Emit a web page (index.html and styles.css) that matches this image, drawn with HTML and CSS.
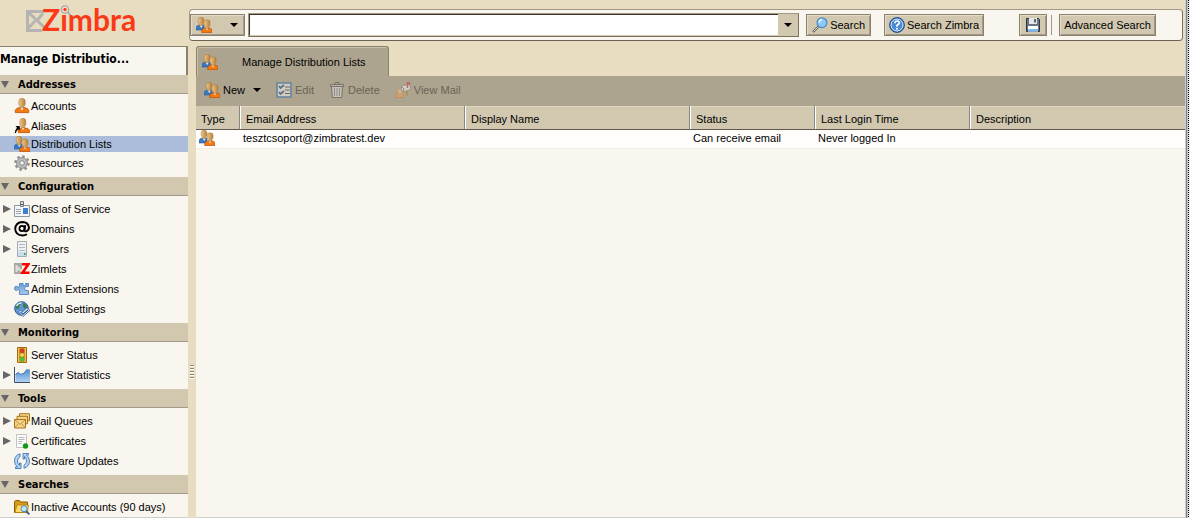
FILE: index.html
```html
<!DOCTYPE html>
<html lang="en">
<head>
<meta charset="utf-8">
<title>Zimbra Administration</title>
<link rel="stylesheet" href="styles.css">
</head>
<body>
<svg class="sprite" aria-hidden="true">
  <defs>
    <linearGradient id="g-skin" x1="0" x2="1"><stop offset="0" stop-color="#ecc98e"/><stop offset="1" stop-color="#b98039"/></linearGradient>
    <linearGradient id="g-blue" x1="0" x2="0" y1="0" y2="1"><stop offset="0" stop-color="#4f8fd6"/><stop offset="1" stop-color="#b4d2f0"/></linearGradient>
    <linearGradient id="g-pane" x1="0" x2="0" y1="0" y2="1"><stop offset="0" stop-color="#6c9fdb"/><stop offset="1" stop-color="#a9c6e8"/></linearGradient>
  </defs>
  <symbol id="i-group" viewBox="0 0 16 16">
    <path d="M0 13V10.500Q.5 8.500 3 8h5v5z" fill="#3a78c2" stroke="#2a5c9c" stroke-width=".6"/>
    <path d="M3.500 8l1.700 3L7 8z" fill="#fff"/>
    <path d="M2.200 2.700Q2.200.3 5 .3T7.800 2.700V4.700Q7.800 6.500 6.400 7v1.800H3.600V7Q2.200 6.500 2.200 4.700z" fill="url(#g-skin)" stroke="#a87436" stroke-width=".5"/>
    <path d="M5.800 15.700V13.200Q6.500 11.300 8.500 11h5q2 .3 2.500 2.200v2.500z" fill="#f27a10" stroke="#b74c06" stroke-width=".7"/>
    <path d="M9.500 11l1.500 2.200 1.500-2.200z" fill="#fff"/>
    <path d="M8 5.200Q8 2.800 11 2.800t3 2.400v2.300q0 1.900-1.500 2.500v1.500H9.500V10Q8 9.400 8 7.500z" fill="url(#g-skin)" stroke="#a87436" stroke-width=".5"/>
  </symbol>
  <symbol id="i-user" viewBox="0 0 16 16">
    <path d="M1.300 14.600v-2.300Q2 10.300 5.500 9.500h5q3.500.8 4.200 2.800v2.300z" fill="#f27a10" stroke="#b74c06" stroke-width=".8"/>
    <path d="M6 9.500l2 3 2-3z" fill="#fff"/>
    <path d="M4.800 3.200Q4.800.3 8 .3t3.200 2.900v2.500Q11.200 7.700 9.700 8.400V10H6.300V8.400Q4.800 7.700 4.800 5.700z" fill="url(#g-skin)" stroke="#a87436" stroke-width=".5"/>
  </symbol>
  <symbol id="i-alias" viewBox="0 0 16 16">
    <path d="M4.300 14.600v-2.300q.7-1.800 3-2.300h4.400q3.100.5 3.900 2.300v2.300z" fill="#f27a10" stroke="#b74c06" stroke-width=".8"/>
    <path d="M7.500 9.800l1.500 2.500 1.500-2.500z" fill="#fff"/>
    <path d="M5.800 3.200Q5.800.3 8.800.3t3 2.900v2.500q0 2-1.400 2.700V10H7.200V8.400Q5.800 7.700 5.800 5.700z" fill="url(#g-skin)" stroke="#a87436" stroke-width=".5"/>
    <path d="M1.500 8h4.300v4.500L4.400 11.200Q2.500 12.500 1.800 15H.8q0-3 2.200-5.200z" fill="#000"/>
  </symbol>
  <symbol id="i-gear" viewBox="0 0 16 16">
    <circle cx="8" cy="8" r="6.600" fill="none" stroke="#8f8f8f" stroke-width="2.400" stroke-dasharray="2.600 2.580"/>
    <circle cx="8" cy="8" r="5.400" fill="#bcbcbc" stroke="#8d8d8d"/>
    <circle cx="8" cy="8" r="2.300" fill="#f9f6ef" stroke="#858585"/>
  </symbol>
  <symbol id="i-cos" viewBox="0 0 16 16">
    <path d="M.5 4.500h15v11H.5z" fill="#f4f6f8" stroke="#8b97a5"/>
    <path d="M2 8.500h5M2 10.500h5M2 12.500h5" stroke="#a0a5ad"/>
    <path d="M9 7h5v6H9z" fill="#3f7fd0"/>
    <path d="M6.500.5h3v5h-3z" fill="#ddd" stroke="#777"/><path d="M7 3.500h2" stroke="#555"/>
  </symbol>
  <symbol id="i-domain" viewBox="0 0 16 16">
    <circle cx="8" cy="7.500" r="2.600" fill="none" stroke="#000" stroke-width="1.800"/>
    <path d="M11.200 4.200l-.7 4.500q0 2 1.600 1.600Q15 9.500 15 6.500 14 1 8.500 1 1.500 1.300 1.200 8q.4 6.300 7.300 6.500 2.500 0 4.500-1.200" fill="none" stroke="#000" stroke-width="1.900"/>
  </symbol>
  <symbol id="i-server" viewBox="0 0 16 16">
    <path d="M3.500.5h9v15h-9z" fill="#eef1f3" stroke="#a5abb0"/>
    <path d="M5 3.500h6M5 6.500h6M5 9.500h6" stroke="#b2b8bd"/>
    <path d="M4 11h8v4H4z" fill="#c8ddee"/><path d="M10 12h1.500v2H10z" fill="#43a32c"/>
  </symbol>
  <symbol id="i-zimlet" viewBox="0 0 16 16">
    <path d="M0 2h8v11H0z" fill="#a8a8a6"/><path d="M2 4l4 3.500L2 11z" fill="#d9d6cf" stroke="#efece5" stroke-width=".8"/><path d="M6 7.500L8 9v3L5 9z" fill="#e9e6df"/>
    <path d="M8 3.300h6.300L8.500 11.700H15.500" fill="none" stroke="#f00" stroke-width="2.600"/>
  </symbol>
  <symbol id="i-puzzle" viewBox="0 0 16 16">
    <path d="M5.500 2.500H9q-.5 2 1.300 2.200 2-.2 1.200-2.200h3v3q-4-.7-4 2t4 2v4h-9V9.800Q4.700 8.300 4 8.300 3.500 9.500 2.300 9.500.5 9.500.5 7.300T2.500 5.300q1.200 0 1.500 1 1 0 1.500-1z" fill="url(#g-pane)" stroke="#4179b9" stroke-width=".8"/>
  </symbol>
  <symbol id="i-globe" viewBox="0 0 16 16">
    <circle cx="7.500" cy="7.500" r="6.800" fill="#5f97d6" stroke="#28568e"/>
    <path d="M2 5.500Q3.500 2 6.500 1.800l.5 1.700-2 1.500.5 2-2 1-1.500-.5zM9 2l3 1.500 1.300 3.300-2.800.7L9 5.500z" fill="#3c7b4b"/>
    <path d="M2.500 5q1.500-3 5-3.200" stroke="#e1f1ff" stroke-width="1.200" fill="none"/>
    <path d="M4.500 11l2-2 2 2L13 6.800l3 2.500-7 6.200z" fill="#eef6ff" stroke="#2c5c91" stroke-width=".8"/><path d="M6.500 10.800l2.500 2.500 5-4.300" stroke="#24558d" fill="none" stroke-width="1.200"/>
  </symbol>
  <symbol id="i-light" viewBox="0 0 16 16">
    <path d="M3.500.5h9v15h-9z" fill="#f4c648" stroke="#a56b0b"/>
    <path d="M5.500 1.500h5v13h-5z" fill="#8a6d28"/>
    <circle cx="8" cy="3.700" r="2.200" fill="#e43524"/><circle cx="8" cy="8" r="2.100" fill="#f5d24a"/><circle cx="8" cy="12.300" r="2.200" fill="#49c340"/>
  </symbol>
  <symbol id="i-chart" viewBox="0 0 16 16">
    <path d="M1.500 7.500L4 5.500l2.500 1.800 3.500-1 2.500-3.500 3.500 1V15H1.500z" fill="url(#g-blue)"/>
    <path d="M1.500 7.500L4 5.500l2.500 1.800 3.500-1 2.500-3.500L16 3" stroke="#4377b0" fill="none"/>
    <path d="M.5 0v15.500H16" stroke="#3c4c60" fill="none"/>
  </symbol>
  <symbol id="i-mailq" viewBox="0 0 16 16">
    <g fill="#f2d58b" stroke="#a9761c"><path d="M5.500.7h10v7h-10z"/><path d="M3 3.300h10.500v7.500H3z"/><path d="M.5 6.500h11v8.500H.5z"/></g>
    <path d="M.5 6.500L6 11.500l5.500-5M.5 15l4-4.500M11.500 15l-4-4.500" fill="none" stroke="#b98628" stroke-width=".8"/>
  </symbol>
  <symbol id="i-cert" viewBox="0 0 16 16">
    <path d="M2.500 1.500h10v13h-10z" fill="#fbfbfb" stroke="#c2c2c2"/><path d="M4.500 4.500h6M4.500 6.500h6M4.500 8.500h4M4.500 10.500h3" stroke="#b5b5b5"/>
    <circle cx="11.500" cy="13" r="2.700" fill="#0b9a12"/>
  </symbol>
  <symbol id="i-sync" viewBox="0 0 16 16">
    <g fill="#b4d6f6" stroke="#2e6bab" stroke-width=".8"><path d="M6 .8Q.5 2.500.5 8q.2 4 3 6H1.500v1.500h5.500V10H5.500v2.500Q3.500 11 3.500 8T6 3.800z"/><path d="M10 15.200q5.500-1.700 5.500-7.200-.2-4-3-6h2V.5H9V6h1.500V3.500q2 1.500 2 4.500T10 12.200z"/></g>
  </symbol>
  <symbol id="i-folder" viewBox="0 0 16 16">
    <path d="M.5 13.500v-11l1-1h4l1 1.500h7v10.500z" fill="#d69c18" stroke="#8a5c05"/>
    <path d="M1 13.500L3 6h11.500l-1 7.500z" fill="#ffd862" stroke="#b37f10" stroke-width=".8"/>
    <path d="M12 12l3.300 3.300" stroke="#2e5e96" stroke-width="1.800"/><circle cx="10" cy="9.700" r="3" fill="#c4e4fc" stroke="#4b8cc8"/>
  </symbol>
  <symbol id="i-search" viewBox="0 0 16 16">
    <path d="M6.500 9.500L1 15" stroke="#666" stroke-width="2.400"/><path d="M6.500 9.500L1.500 14.500" stroke="#d0d3d6"/>
    <circle cx="10" cy="5.700" r="4.900" fill="#8cc8f8" stroke="#4a86c0" stroke-width="1.200"/><path d="M7 5.500Q7.500 2.700 10 2.500" stroke="#eaf7ff" fill="none" stroke-width="1.500"/>
  </symbol>
  <symbol id="i-help" viewBox="0 0 16 16">
    <circle cx="8" cy="8" r="7.400" fill="#2d68b4" stroke="#1f4f8f"/><circle cx="8" cy="8" r="6" fill="#4b8ad3" stroke="#e4f0fd" stroke-width="1"/>
    <path d="M5.800 6.200Q6 4 8.100 4t2.200 1.900Q10.200 7.200 8 8.200V9.700" fill="none" stroke="#fff" stroke-width="1.600"/><circle cx="8" cy="11.700" r="1" fill="#fff"/>
  </symbol>
  <symbol id="i-save" viewBox="0 0 16 16">
    <path d="M1.500 1.500h12l1 1v12h-13z" fill="#6a7482" stroke="#2f353c"/><path d="M4 1h8v6H4z" fill="#e4e6e8"/><path d="M9 2h2v3.500H9z" fill="#596575"/>
    <path d="M3 9h10v5.500H3z" fill="#fff"/><path d="M3 12h10v2.500H3z" fill="#7db8f0"/>
  </symbol>
  <symbol id="i-edit" viewBox="0 0 16 16">
    <path d="M1 1h14v14H1z" fill="#eef4fc" stroke="#2264ad" stroke-width="1.600"/>
    <path d="M9 5h5M9 8h5M9 11.500h5" stroke="#333"/><path d="M3 4l1.500 2L8 3M3 10l1.500 2L8 9" fill="none" stroke="#153e70" stroke-width="1.700"/>
  </symbol>
  <symbol id="i-trash" viewBox="0 0 16 16">
    <path d="M2.500 4.500h11l-.8 11H3.300z" fill="#e0e0e0" stroke="#444"/><path d="M1.500 2.500h13v2h-13z" fill="#ccc" stroke="#444"/><path d="M6 2V.5h4V2" fill="none" stroke="#444"/>
    <path d="M5.500 6v8M8 6v8M10.500 6v8" stroke="#777"/>
  </symbol>
  <symbol id="i-viewmail" viewBox="0 0 16 16">
    <path d="M.5 15.500v-2Q1 11.500 3 11h3q2 .5 2.500 2v2.500z" fill="#f8a050" stroke="#c06b20" stroke-width=".7"/><path d="M2 8.500Q2.500 6.500 4.800 6.500T7.200 8.500V10.500l-1 1.500H3.500L2 10.500z" fill="#f0c080" stroke="#b07c3c" stroke-width=".6"/>
    <path d="M6 6.500Q6 4 8 3.500l5-1Q15.500 2.500 15.500 5v2.500L9 10 7 9z" fill="#f4f4f4" stroke="#777" stroke-width=".8"/><path d="M6.500 5.500Q9 5 8.800 9.500" fill="none" stroke="#555"/><path d="M12.500 6V.8h2v2" stroke="#d1282a" stroke-width="1.400" fill="none"/><path d="M12 8.500v5" stroke="#b87f1c" stroke-width="2"/>
  </symbol>
</svg>

<div class="app">
  <div class="brand">
    <svg class="logo" viewBox="0 0 112 28" role="img" aria-label="Zimbra">
      <path d="M19 6.500H2.500v19H17M2.500 6.500L12 15.500l6-7M10 16L2.500 24M11 14.500l9 8.500" fill="none" stroke="#b5b3b3" stroke-width="3"/>
      <text class="logo-text" x="17" y="26">Zimbra</text>
      <circle cx="40" cy="4.500" r="3.600" fill="#f1eadb" stroke="#a9a6a4" stroke-width="1.300"/><path d="M42.500 7l3 3" stroke="#a9a6a4" stroke-width="1.700"/><circle cx="40" cy="4.500" r="1.700" fill="#fa3a16"/>
    </svg>
  </div>

  <header class="top">
    <form class="searchbar" role="search">
      <button type="button" class="btn type-btn" aria-label="Search type"><svg class="icon"><use href="#i-group"/></svg><span class="caret"></span></button>
      <div class="query">
        <input type="text" aria-label="Search query">
        <button type="button" aria-label="Search options"><span class="caret"></span></button>
      </div>
      <button type="button" class="btn"><svg class="icon"><use href="#i-search"/></svg>Search</button>
      <button type="button" class="btn zimbra-btn"><svg class="icon"><use href="#i-help"/></svg>Search Zimbra</button>
      <button type="button" class="btn save-btn" aria-label="Save search"><svg class="icon"><use href="#i-save"/></svg></button>
      <span class="divider"></span>
      <button type="button" class="btn advanced-btn">Advanced Search</button>
    </form>
  </header>

  <nav class="sidebar" aria-label="Administration">
    <h1 class="nav-title">Manage Distributio...</h1>
    <section>
      <h2><span class="tri-down"></span>Addresses</h2>
      <ul class="addresses">
        <li><a href="#"><svg class="icon"><use href="#i-user"/></svg>Accounts</a></li>
        <li><a href="#"><svg class="icon"><use href="#i-alias"/></svg>Aliases</a></li>
        <li class="selected"><a href="#" aria-current="page"><svg class="icon"><use href="#i-group"/></svg>Distribution Lists</a></li>
        <li><a href="#"><svg class="icon"><use href="#i-gear"/></svg>Resources</a></li>
      </ul>
    </section>
    <section>
      <h2><span class="tri-down"></span>Configuration</h2>
      <ul>
        <li class="expandable"><a href="#"><svg class="icon"><use href="#i-cos"/></svg>Class of Service</a></li>
        <li class="expandable"><a href="#"><svg class="icon"><use href="#i-domain"/></svg>Domains</a></li>
        <li class="expandable"><a href="#"><svg class="icon"><use href="#i-server"/></svg>Servers</a></li>
        <li><a href="#"><svg class="icon"><use href="#i-zimlet"/></svg>Zimlets</a></li>
        <li><a href="#"><svg class="icon"><use href="#i-puzzle"/></svg>Admin Extensions</a></li>
        <li><a href="#"><svg class="icon"><use href="#i-globe"/></svg>Global Settings</a></li>
      </ul>
    </section>
    <section>
      <h2><span class="tri-down"></span>Monitoring</h2>
      <ul>
        <li><a href="#"><svg class="icon"><use href="#i-light"/></svg>Server Status</a></li>
        <li class="expandable"><a href="#"><svg class="icon"><use href="#i-chart"/></svg>Server Statistics</a></li>
      </ul>
    </section>
    <section>
      <h2><span class="tri-down"></span>Tools</h2>
      <ul>
        <li class="expandable"><a href="#"><svg class="icon"><use href="#i-mailq"/></svg>Mail Queues</a></li>
        <li class="expandable"><a href="#"><svg class="icon"><use href="#i-cert"/></svg>Certificates</a></li>
        <li><a href="#"><svg class="icon"><use href="#i-sync"/></svg>Software Updates</a></li>
      </ul>
    </section>
    <section>
      <h2><span class="tri-down"></span>Searches</h2>
      <ul class="last">
        <li><a href="#"><svg class="icon"><use href="#i-folder"/></svg>Inactive Accounts (90 days)</a></li>
      </ul>
    </section>
  </nav>

  <div class="splitter"><span class="grip"></span></div>

  <main class="content">
    <div class="tabs"><button type="button" class="tab"><svg class="icon"><use href="#i-group"/></svg><span>Manage Distribution Lists</span></button></div>
    <div class="toolbar">
      <button type="button" class="tool new"><svg class="icon"><use href="#i-group"/></svg>New<span class="caret"></span></button>
      <button type="button" class="tool" disabled><svg class="icon"><use href="#i-edit"/></svg>Edit</button>
      <button type="button" class="tool" disabled><svg class="icon"><use href="#i-trash"/></svg>Delete</button>
      <button type="button" class="tool" disabled><svg class="icon"><use href="#i-viewmail"/></svg>View Mail</button>
    </div>
    <div class="list">
      <table>
        <colgroup><col class="c-type"><col class="c-wide"><col class="c-wide"><col class="c-status"><col class="c-login"><col></colgroup>
        <thead><tr><th>Type</th><th>Email Address</th><th>Display Name</th><th>Status</th><th>Last Login Time</th><th>Description</th></tr></thead>
        <tbody><tr><td><svg class="icon"><use href="#i-group"/></svg></td><td>tesztcsoport@zimbratest.dev</td><td></td><td>Can receive email</td><td>Never logged In</td><td></td></tr></tbody>
      </table>
    </div>
  </main>

  <div class="edge"></div>
</div>
</body>
</html>
```
FILE: styles.css
```css
* { box-sizing: border-box; }

:root {
  --sand: #e8ddc1;
  --tan: #d2c8b0;
  --olive: #ada48f;
  --paper: #f9f6ef;
  --line: #a2998a;
}

body {
  margin: 0;
  background: var(--sand);
  color: #000;
  font: 11px/16px Tahoma, "Liberation Sans", sans-serif;
}

button, input { font: inherit; color: inherit; margin: 0; }
button { padding: 0; border: 0; background: none; display: flex; align-items: center; }
a { color: inherit; text-decoration: none; }

.sprite { position: absolute; width: 0; height: 0; }
.icon { width: 16px; height: 16px; flex: none; display: block; }

.app {
  display: grid;
  grid-template-columns: 188px 8px minmax(0, 1fr) 5px;
  grid-template-rows: 46px 1fr;
  min-height: 100vh;
}

.brand { padding: 5px 0 0 25px; }
.logo { display: block; width: 112px; height: 28px; overflow: visible; }
.logo-text { font: 700 30px Lato, sans-serif; fill: #fa3a16; }

.top { grid-column: 2 / 4; padding: 9px 2px 5px 1px; }
.searchbar {
  display: flex;
  align-items: center;
  height: 32px;
  padding-right: 26px;
  background: var(--paper);
  border: 1px solid;
  border-color: #a2998a #7a715f #6b6354 #a2998a;
  border-radius: 4px;
}
.btn {
  height: 22px;
  padding: 0 5px;
  gap: 2px;
  flex: none;
  white-space: nowrap;
  background: var(--tan);
  border: 1px solid #8b826e;
  box-shadow: inset 1px 1px #e5dcc8, inset -1px -1px #a2998a;
}
.type-btn { width: 55px; gap: 18px; }
.caret {
  width: 0;
  height: 0;
  border: 4px solid transparent;
  border-top-color: #000;
  border-bottom-width: 0;
}
.query {
  display: flex;
  flex: 1;
  height: 24px;
  margin: 0 7px 0 3px;
  border: 1px solid #a2998a;
  border-right-color: #7a715f;
  border-bottom-color: #7a715f;
}
.query input {
  flex: 1;
  min-width: 0;
  padding: 0 4px;
  background: #fff;
  border: 1px solid #403528;
  border-right: 0;
  border-bottom-color: #d2c8b0;
  outline: 0;
}
.query button { width: 20px; justify-content: center; background: var(--tan); }
.zimbra-btn { margin: 0 35px 0 13px; padding: 0 4px; }
.divider { width: 2px; height: 20px; margin: 0 6px 0 4px; border-left: 1px solid var(--line); }
.advanced-btn { padding: 0 4px; }

.sidebar { background: var(--paper); border-bottom: 1px solid #ccc; white-space: nowrap; }
.nav-title {
  height: 29px;
  margin: 0;
  overflow: hidden;
  font: 700 12px/24px "DejaVu Sans Condensed", sans-serif;
  border: solid #8b826e;
  border-width: 1px 2px 0 0;
}
.sidebar h2 {
  display: flex;
  align-items: center;
  gap: 9px;
  height: 19px;
  margin: 0;
  padding-top: 1px;
  padding-left: 1px;
  background: var(--tan);
  border-bottom: 1px solid var(--line);
  font: 700 11px/18px "DejaVu Sans Condensed", sans-serif;
}
.tri-down { border: 4px solid transparent; border-top: 7px solid #666; border-bottom: 0; }
.sidebar ul { margin: 0; padding: 3px 0 4px; list-style: none; }
.sidebar li { display: flex; align-items: center; height: 20px; padding-left: 14px; }
.sidebar li a { display: flex; align-items: center; gap: 1px; }
.sidebar .expandable { padding-left: 3px; gap: 3px; }
.expandable::before { content: ""; border: 4px solid transparent; border-left: 8px solid #666; border-right: 0; }
.sidebar .addresses li { height: 20px; }
.sidebar .addresses { padding-top: 2px; }
.sidebar .addresses .selected { height: 16px; background: #abbddb; }
.sidebar .addresses li:last-child { height: 21px; }
.sidebar .last { padding-bottom: 0; }

.splitter { display: flex; align-items: center; justify-content: center; padding-top: 180px; }
.grip { width: 4px; height: 14px; background: repeating-linear-gradient(#8d8676 0 1px, #fff 1px 2px, var(--sand) 2px 3px); }

.content { display: flex; flex-direction: column; background: var(--paper); border-bottom: 1px solid #ccc; }
.tabs { background: var(--sand); }
.tab {
  width: 193px;
  height: 30px;
  padding: 1px 0 0 5px;
  gap: 24px;
  background: var(--olive);
  border: 1px solid #8b826e;
  border-bottom: 0;
  border-radius: 3px 3px 0 0;
  box-shadow: inset 1px 1px #c8bfa9;
}
.toolbar { display: flex; align-items: center; gap: 15px; height: 30px; padding: 0 0 2px 8px; background: var(--olive); }
.tool { gap: 3px; }
.tool:disabled { color: #696355; }
.tool:disabled .icon { opacity: .5; }
.new .caret { margin-left: 5px; }

table { width: 100%; table-layout: fixed; border-collapse: separate; border-spacing: 0; }
.c-type { width: 44px; }
.c-wide { width: 225px; }
.c-status { width: 125px; }
.c-login { width: 155px; }
th {
  height: 24px;
  padding: 2px 6px 0;
  text-align: left;
  font-weight: 400;
  background: var(--tan);
  border-bottom: 1px solid #5f584b;
  box-shadow: inset 1px 0 #fff, inset 0 1px #e0d7c2;
  border-right: 1px solid #888;
}
th:first-child { box-shadow: none; padding-left: 5px; }
th:last-child { border-right: 0; }
td { height: 19px; padding: 0 3px 2px; line-height: 16px; background: #fffefc; border-bottom: 1px solid #f1eee6; }

.edge {
  grid-column: 4;
  grid-row: 1 / 3;
  background:
    repeating-linear-gradient(#000 0 1px, #eee 1px 2px) 3px 0 / 1px 100% no-repeat,
    linear-gradient(90deg, #ccc 1px, #7d838a 1px 2px, #c4c8cc 2px 3px, #eee 3px);
}
```
